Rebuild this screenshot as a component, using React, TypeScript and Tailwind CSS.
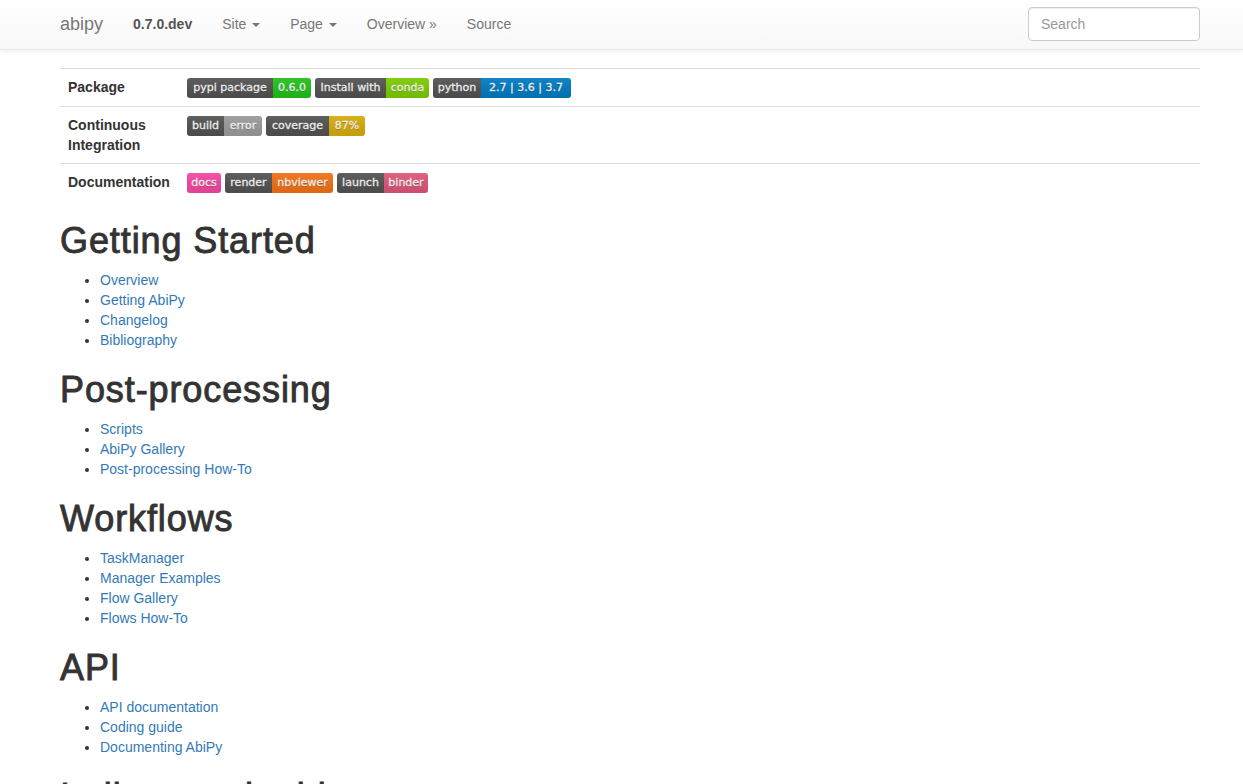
import React from "react";

type Part = { t: string; w: string; bg: string };

const badgeRows: { label: React.ReactNode; badges: Part[][] }[] = [
  {
    label: "Package",
    badges: [
      [
        { t: "pypi package", w: "w-[86px]", bg: "bg-[#555]" },
        { t: "0.6.0", w: "w-[38px]", bg: "bg-[#22c51b]" },
      ],
      [
        { t: "Install with", w: "w-[71px]", bg: "bg-[#555]" },
        { t: "conda", w: "w-[43px]", bg: "bg-[#80d000]" },
      ],
      [
        { t: "python", w: "w-[48px]", bg: "bg-[#555]" },
        { t: "2.7 | 3.6 | 3.7", w: "w-[90px]", bg: "bg-[#007ec6]" },
      ],
    ],
  },
  {
    label: (
      <>
        Continuous
        <br />
        Integration
      </>
    ),
    badges: [
      [
        { t: "build", w: "w-[37px]", bg: "bg-[#555]" },
        { t: "error", w: "w-[38px]", bg: "bg-[#9f9f9f]" },
      ],
      [
        { t: "coverage", w: "w-[63px]", bg: "bg-[#555]" },
        { t: "87%", w: "w-[36px]", bg: "bg-[#dbb00c]" },
      ],
    ],
  },
  {
    label: "Documentation",
    badges: [
      [{ t: "docs", w: "w-[34px]", bg: "bg-[#fb48a6]" }],
      [
        { t: "render", w: "w-[47px]", bg: "bg-[#555]" },
        { t: "nbviewer", w: "w-[61px]", bg: "bg-[#f97316]" },
      ],
      [
        { t: "launch", w: "w-[47px]", bg: "bg-[#555]" },
        { t: "binder", w: "w-[44px]", bg: "bg-[#e4587a]" },
      ],
    ],
  },
];

const sections = [
  { title: "Getting Started", links: ["Overview", "Getting AbiPy", "Changelog", "Bibliography"] },
  { title: "Post-processing", links: ["Scripts", "AbiPy Gallery", "Post-processing How-To"] },
  { title: "Workflows", links: ["TaskManager", "Manager Examples", "Flow Gallery", "Flows How-To"] },
  { title: "API", links: ["API documentation", "Coding guide", "Documenting AbiPy"] },
  { title: "Indices and tables", links: ["Index", "Module Index", "Search Page"] },
];

function Badge({ parts }: { parts: Part[] }) {
  return (
    <span className="relative inline-flex h-[20px] overflow-hidden rounded-[3px] font-['DejaVu_Sans',Verdana,sans-serif] text-[11px] text-white [text-shadow:0_1px_0_rgba(1,1,1,0.3)] [-webkit-text-stroke:0.3px_white]">
      {parts.map((p) => (
        <span key={p.t} className={`${p.w} ${p.bg} flex items-center justify-center whitespace-nowrap`}>
          {p.t}
        </span>
      ))}
      <span className="pointer-events-none absolute inset-0 bg-gradient-to-b from-[#bbbbbb]/10 to-black/10" />
    </span>
  );
}

function Caret() {
  return (
    <span className="ml-[2px] inline-block h-0 w-0 align-middle border-t-4 border-x-4 border-x-transparent border-t-[#777]" />
  );
}

export default function App() {
  return (
    <div className="min-h-screen bg-white font-['Liberation_Sans',Arial,sans-serif] text-[14px] leading-[20px] text-[#333]">
      <nav className="h-[50px] border-b border-[#e7e7e7] bg-gradient-to-b from-white to-[#f8f8f8] shadow-[inset_0_1px_0_rgba(255,255,255,0.15),0_1px_5px_rgba(0,0,0,0.075)]">
        <div className="ml-[60px] flex h-full w-[1140px] items-start">
          <a className="-ml-[15px] px-[15px] pb-[15px] pt-[14px] text-[18px] leading-[20px] text-[#777]">abipy</a>
          <ul className="flex">
            <li>
              <a className="block px-[15px] pb-[15px] pt-[14px] font-bold text-[#555]">0.7.0.dev</a>
            </li>
            <li>
              <a className="block px-[15px] pb-[15px] pt-[14px] text-[#777]">
                Site <Caret />
              </a>
            </li>
            <li>
              <a className="block px-[15px] pb-[15px] pt-[14px] text-[#777]">
                Page <Caret />
              </a>
            </li>
            <li>
              <a className="block px-[15px] pb-[15px] pt-[14px] text-[#777]">Overview »</a>
            </li>
            <li>
              <a className="block px-[15px] pb-[15px] pt-[14px] text-[#777]">Source</a>
            </li>
          </ul>
          <div className="ml-auto mt-[7px]">
            <input
              placeholder="Search"
              className="h-[34px] w-[172px] rounded-[4px] border border-[#ccc] bg-white px-[12px] text-[14px] text-[#555] placeholder:text-[#999] shadow-[inset_0_1px_1px_rgba(0,0,0,0.075)] outline-none"
            />
          </div>
        </div>
      </nav>

      <main className="ml-[60px] w-[1140px] pt-[18px]">
        <div className="mb-[20px]">
          {badgeRows.map((row, i) => (
            <div key={i} className="grid grid-cols-[119px_1fr] border-t border-[#ddd]">
              <div className="p-[8px] font-bold">{row.label}</div>
              <div className="flex gap-[4px] p-[8px] pt-[9px]">
                {row.badges.map((parts, j) => (
                  <Badge key={j} parts={parts} />
                ))}
              </div>
            </div>
          ))}
        </div>

        {sections.map((s) => (
          <section key={s.title}>
            <h1 className="mb-[10px] mt-[20px] text-[36px] font-normal leading-[39px] tracking-[0.9px] text-[#333] [-webkit-text-stroke:0.9px_#333]">
              {s.title}
            </h1>
            <ul className="mb-[10px] list-disc pl-[40px] marker:text-[#333]">
              {s.links.map((l) => (
                <li key={l}>
                  <a className="text-[#337ab7]">{l}</a>
                </li>
              ))}
            </ul>
          </section>
        ))}
      </main>
    </div>
  );
}
